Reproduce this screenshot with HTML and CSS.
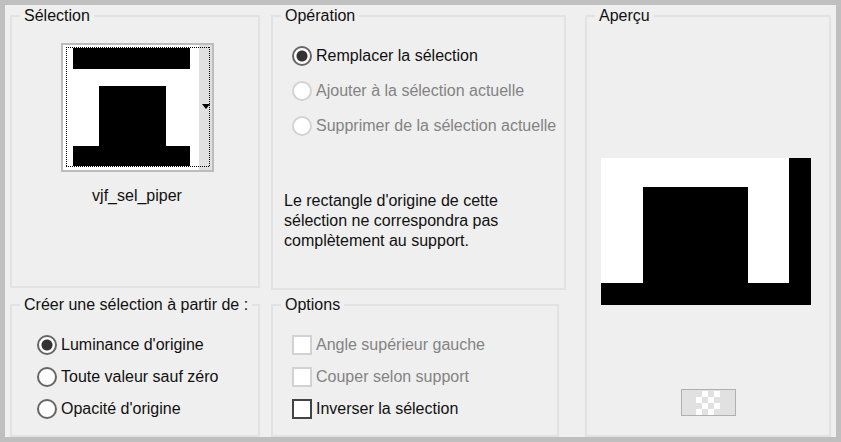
FILE: index.html
```html
<!DOCTYPE html>
<html lang="fr">
<head>
    <meta charset="UTF-8" />
    <meta name="viewport" content="width=device-width, initial-scale=1.0" />
    <title>Sélection</title>
    <link rel="stylesheet" href="styles.css">
</head>
<body>
    <form class="dialog">
        <div class="column">
            <fieldset class="group group-selection">
                <legend>Sélection</legend>
                <div class="picker-box">
                    <button type="button" class="picker" aria-labelledby="pickerName">
                        <svg viewBox="0 0 149 125" aria-hidden="true">
                            <rect width="149" height="125" fill="#fff" />
                            <rect x="136" width="13" height="125" fill="#e1e1e1" />
                            <path d="M10 3h117v21H10zM36 41h67v60h24v20H10v-20h26z" fill="#000" />
                            <path d="M3 2.5h144M3 121.5h144M3.5 2v120M146.5 2v120" fill="none" stroke="#000" stroke-dasharray="1 1" />
                            <path d="M139 59h8l-4 5z" fill="#000" />
                        </svg>
                    </button>
                    <div id="pickerName">vjf_sel_piper</div>
                </div>
            </fieldset>

            <fieldset class="group group-last">
                <legend>Créer une sélection à partir de :</legend>
                <div class="choices choices-source">
                    <label><input type="radio" name="source" checked /> Luminance d'origine</label>
                    <label><input type="radio" name="source" /> Toute valeur sauf zéro</label>
                    <label><input type="radio" name="source" /> Opacité d'origine</label>
                </div>
            </fieldset>
        </div>

        <div class="column">
            <fieldset class="group">
                <legend>Opération</legend>
                <div class="choices choices-operation">
                    <label><input type="radio" name="operation" checked /> Remplacer la sélection</label>
                    <label class="off"><input type="radio" name="operation" disabled /> Ajouter à la sélection actuelle</label>
                    <label class="off"><input type="radio" name="operation" disabled /> Supprimer de la sélection actuelle</label>
                </div>
                <p class="note">Le rectangle d'origine de cette sélection ne correspondra pas complètement au support.</p>
            </fieldset>

            <fieldset class="group group-last group-options">
                <legend>Options</legend>
                <div class="choices">
                    <label class="off"><input type="checkbox" disabled /> Angle supérieur gauche</label>
                    <label class="off"><input type="checkbox" disabled /> Couper selon support</label>
                    <label><input type="checkbox" /> Inverser la sélection</label>
                </div>
            </fieldset>
        </div>

        <div class="column column-preview">
            <fieldset class="group group-last">
                <legend>Aperçu</legend>
                <svg class="preview" viewBox="0 0 210 147" role="img" aria-label="Aperçu">
                    <rect width="210" height="147" fill="#fff" />
                    <path d="M0 125h42V29h105v96h41V0h22v147H0z" fill="#000" />
                </svg>
                <button type="button" class="backdrop" aria-label="Fond">
                    <svg viewBox="0 0 24 24" aria-hidden="true">
                        <path d="M6 0h6v6H6zM18 0h6v6h-6zM0 6h6v6H0zM12 6h6v6h-6zM6 12h6v6H6zM18 12h6v6h-6zM0 18h6v6H0zM12 18h6v6h-6z" fill="#fff" />
                    </svg>
                </button>
            </fieldset>
        </div>
    </form>
</body>
</html>
```
FILE: styles.css
```css
* {
    box-sizing: border-box;
}

body {
    font-family: "Liberation Sans", Arial, sans-serif;
    font-size: 16px;
    line-height: 20px;
    margin: 0;
    color: #111;
    background-color: #efefef;
}

.dialog {
    display: grid;
    grid-template-columns: 250fr 295fr 254fr;
    column-gap: 11px;
    min-height: 100vh;
    padding: 1px 5px 0;
    border: 5px solid #bfbfbf;
}

.column {
    display: flex;
    flex-direction: column;
    gap: 5px;
    min-width: 0;
}

.column-preview {
    padding-left: 8px;
}

.group {
    min-width: 0;
    margin: 0;
    padding: 0 8px;
    border: 2px solid #e2e2e2;
}

.group legend {
    padding: 0 4px;
    white-space: nowrap;
}

.group-last {
    flex: 1;
}

.group-selection {
    margin-bottom: 2px;
    padding-bottom: 80px;
}

.group-options {
    margin-right: 7px;
}

/* Pattern drop-down */
.picker-box {
    padding: 17px 0 0 4px;
    text-align: center;
}

.picker {
    display: block;
    width: 153px;
    margin: 0 auto 14px;
    padding: 0;
    border: 2px solid #bcbcbc;
    background-color: #fff;
}

.picker svg,
.backdrop svg {
    display: block;
}

/* Radio and checkbox lists */
.choices {
    display: flex;
    flex-direction: column;
    align-items: flex-start;
    gap: 12px;
    padding: 20px 0 0 11px;
}

.choices-source {
    padding-left: 17px;
}

.choices-operation {
    gap: 15px;
}

.choices label {
    display: flex;
    align-items: center;
    gap: 4px;
    white-space: nowrap;
}

.choices label.off {
    color: #838383;
}

.choices input {
    appearance: none;
    width: 20px;
    height: 20px;
    margin: 0;
    border: 2px solid #444;
    background-color: #fff;
}

.choices input[type="radio"] {
    border-color: #666;
    border-radius: 50%;
}

.choices input[type="radio"]:checked {
    background-image: radial-gradient(circle, #333 5px, #fff 6px);
}

.choices input:disabled {
    border-color: #d2d2d2;
}

.note {
    max-width: 240px;
    margin: 55px 0 0;
    padding: 0 0 37px 3px;
}

/* Preview */
.preview {
    display: block;
    width: 100%;
    margin-top: 132px;
    padding: 0 10px 0 6px;
}

.backdrop {
    display: flex;
    align-items: center;
    justify-content: center;
    width: 55px;
    height: 27px;
    margin: 84px auto 0;
    padding: 0;
    border: 1px solid #b0b0b0;
    background-color: #e1e1e1;
}

.backdrop svg {
    width: 24px;
    height: 24px;
}
```
